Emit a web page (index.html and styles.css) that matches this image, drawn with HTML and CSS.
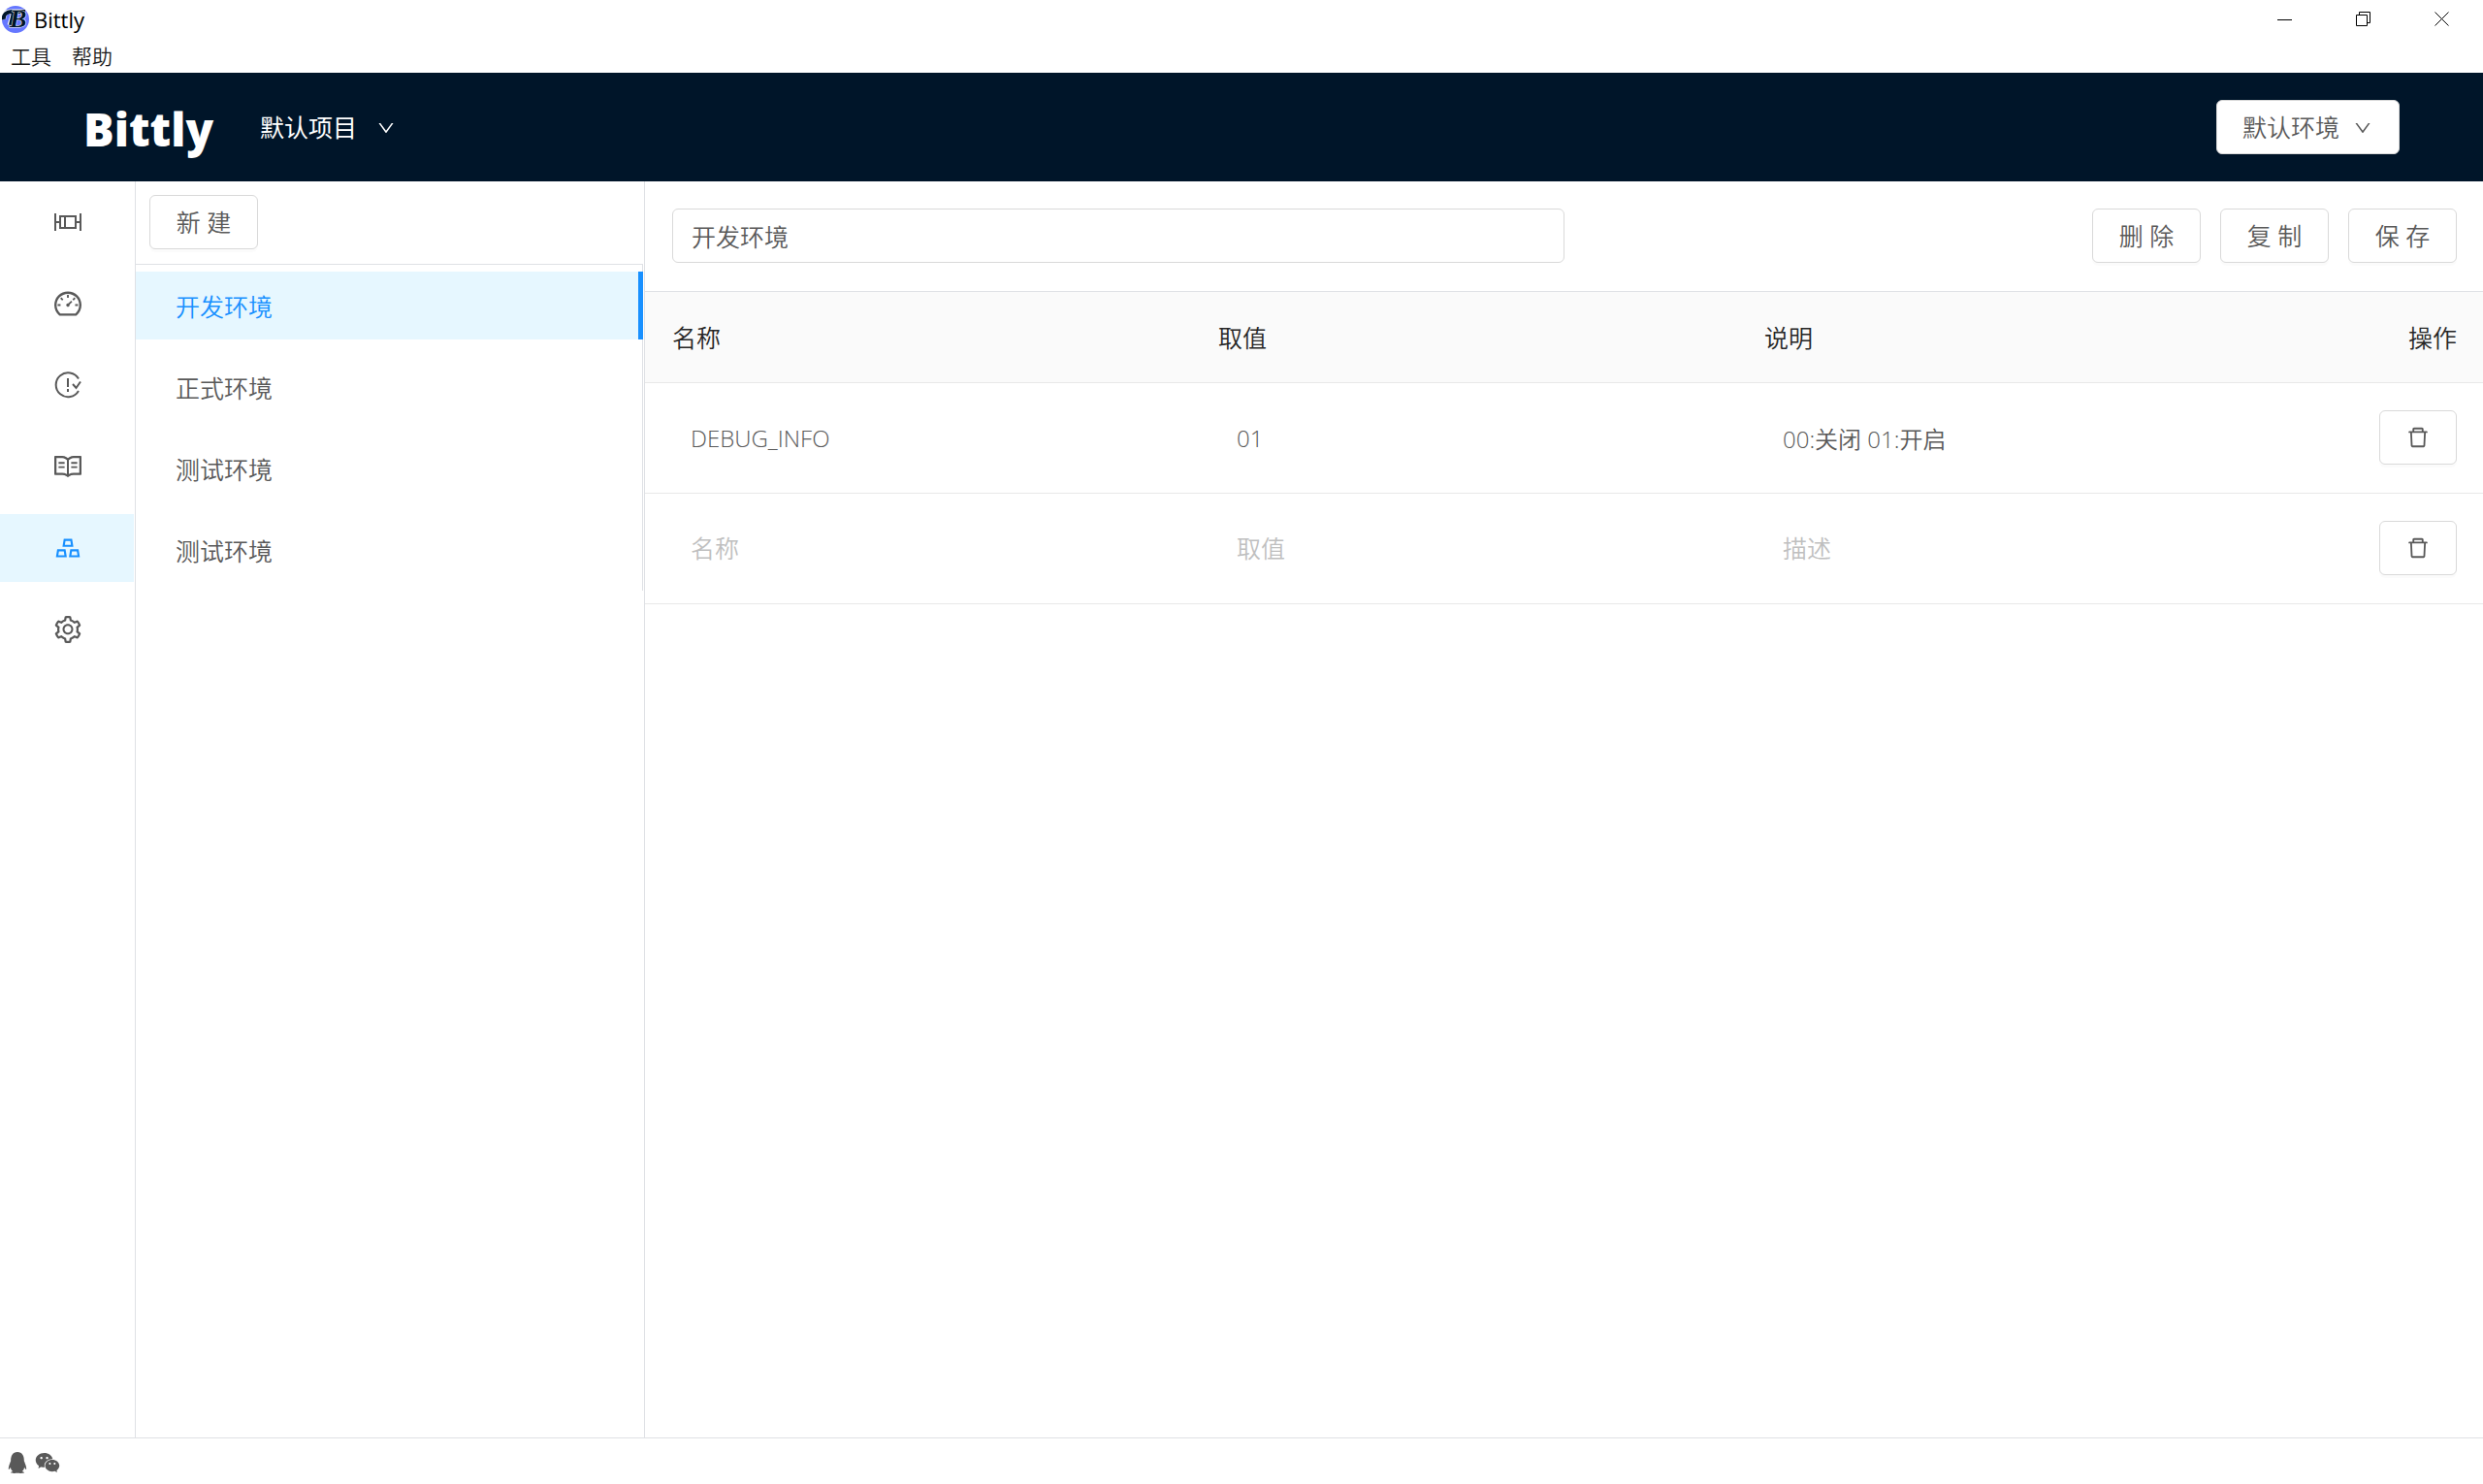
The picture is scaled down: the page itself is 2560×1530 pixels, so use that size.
FILE: index.html
```html
<!DOCTYPE html>
<html lang="zh-CN">
<head>
<meta charset="utf-8">
<title>Bittly</title>
<link rel="stylesheet" href="styles.css">
</head>
<body>
<svg class="sprite" aria-hidden="true">
  <symbol id="i-down" viewBox="0 0 1024 1024"><path d="M884 256h-75c-5.1 0-9.9 2.5-12.9 6.6L512 654.2 227.9 262.6c-3-4.1-7.8-6.6-12.9-6.6h-75c-6.5 0-10.3 7.4-6.5 12.7l352.6 486.1c12.8 17.6 39 17.6 51.7 0l352.6-486.1c3.9-5.3.1-12.7-6.4-12.7z"/></symbol>
  <symbol id="i-delete" viewBox="0 0 1024 1024"><path d="M360 184h-8c4.4 0 8-3.6 8-8v8h304v-8c0 4.4 3.6 8 8 8h-8v72h72v-80c0-35.3-28.7-64-64-64H352c-35.3 0-64 28.7-64 64v80h72v-72zm504 72H160c-17.7 0-32 14.3-32 32v32c0 4.4 3.6 8 8 8h60.4l24.7 523c1.6 34.1 29.8 61 63.9 61h454c34.2 0 62.3-26.8 63.9-61l24.7-523H888c4.4 0 8-3.6 8-8v-32c0-17.7-14.3-32-32-32zM731.3 840H292.7l-24.2-512h487l-24.2 512z"/></symbol>
</svg>

<div class="titlebar">
  <div class="titlebar-name">
    <svg class="app-icon" viewBox="0 0 28 28" aria-hidden="true"><circle cx="14" cy="14" r="14" fill="#6577ff"/><path d="M2 14C1 9 4 6 9 6h14M12 7L8 20" fill="none" stroke="#fff" stroke-width="5"/><path d="M2 14c-1-5 3-8 8-8h14M12 7L9 20" fill="none" stroke="#001529" stroke-width="4"/><text x="8" y="22" class="app-icon-letter">B</text></svg>
    <span>Bittly</span>
  </div>
  <div class="window-controls">
    <button type="button" aria-label="最小化"><svg viewBox="0 0 16 16"><path d="M0 8.500h15"/></svg></button>
    <button type="button" aria-label="还原"><svg viewBox="0 0 16 16"><path d="M.5 3.500h11v11H.5zM3.500 3.500v-3h11v11h-3"/></svg></button>
    <button type="button" aria-label="关闭"><svg viewBox="0 0 16 16"><path d="M.5.5l14 14M14.500.5l-14 14"/></svg></button>
  </div>
</div>
<nav class="menubar">
  <button type="button">工具</button>
  <button type="button">帮助</button>
</nav>

<header class="header">
  <a class="logo" href="#">Bittly</a>
  <button type="button" class="project">默认项目<svg class="i-down"><use href="#i-down"/></svg></button>
  <button type="button" class="btn env">默认环境<svg class="i-down"><use href="#i-down"/></svg></button>
</header>

<div class="body">
  <nav class="rail">
    <a href="#" aria-label="通信"><svg class="stroked" viewBox="0 0 32 32"><path d="M3 7v18M29 7v18M3 16h5M24 16h5M8 10h16v12H8zM13 10v12"/></svg></a>
    <a href="#" aria-label="仪表盘"><svg viewBox="0 0 1024 1024"><path d="M924.8 385.6a446.7 446.7 0 00-96-142.4 446.7 446.7 0 00-142.4-96C631.1 123.8 572.5 112 512 112s-119.1 11.8-174.4 35.2a446.7 446.7 0 00-142.4 96 446.7 446.7 0 00-96 142.4C75.8 440.9 64 499.5 64 560c0 132.7 58.3 257.7 159.9 343.1l1.700 1.400c5.800 4.800 13.100 7.500 20.600 7.500h531.7c7.500 0 14.800-2.700 20.600-7.500l1.700-1.400C901.7 817.7 960 692.7 960 560c0-60.500-11.900-119.100-35.200-174.400zM761.4 836H262.6A371.12 371.12 0 01140 560c0-99.400 38.700-192.800 109-263 70.300-70.300 163.700-109 263-109 99.400 0 192.800 38.700 263 109 70.300 70.300 109 163.700 109 263 0 105.600-44.500 205.500-122.600 276zM623.5 421.5a8.030 8.030 0 00-11.300 0L527.7 506c-18.700-5-39.400-.2-54.100 14.500a55.950 55.950 0 000 79.200 55.950 55.950 0 0079.200 0 55.870 55.870 0 0014.500-54.100l84.500-84.500c3.100-3.100 3.100-8.200 0-11.300l-28.300-28.300zM490 320h44c4.400 0 8-3.600 8-8v-80c0-4.400-3.600-8-8-8h-44c-4.400 0-8 3.600-8 8v80c0 4.400 3.600 8 8 8zm260 218v44c0 4.400 3.600 8 8 8h80c4.400 0 8-3.600 8-8v-44c0-4.400-3.600-8-8-8h-80c-4.400 0-8 3.600-8 8zm12.700-197.200l-31.100-31.100a8.030 8.030 0 00-11.300 0l-56.600 56.600a8.030 8.030 0 000 11.300l31.100 31.100c3.100 3.100 8.200 3.100 11.300 0l56.600-56.600c3.100-3.100 3.100-8.200 0-11.300zm-458.600-31.100a8.030 8.030 0 00-11.300 0l-31.100 31.100a8.030 8.030 0 000 11.300l56.600 56.600c3.100 3.100 8.200 3.100 11.300 0l31.100-31.100c3.100-3.100 3.100-8.200 0-11.300l-56.600-56.600zM262 530h-80c-4.400 0-8 3.600-8 8v44c0 4.400 3.600 8 8 8h80c4.400 0 8-3.600 8-8v-44c0-4.400-3.600-8-8-8z"/></svg></a>
    <a href="#" aria-label="测试"><svg class="stroked" viewBox="0 0 32 32"><path d="M27 9.500A12.500 12.500 0 1 0 27 22M16 9v9M16 20v3"/><path d="M21 15l3.500 4L29 12.500"/></svg></a>
    <a href="#" aria-label="文档"><svg viewBox="0 0 1024 1024"><path d="M928 161H699.2c-49.100 0-97.100 14.100-138.400 40.700L512 233l-48.800-31.300A255.2 255.2 0 00324.8 161H96c-17.700 0-32 14.300-32 32v568c0 17.700 14.300 32 32 32h228.8c49.100 0 97.100 14.100 138.400 40.700l44.400 28.600c1.300.8 2.800 1.300 4.300 1.300s3-.4 4.300-1.300l44.400-28.600C602 807.1 650.1 793 699.2 793H928c17.700 0 32-14.300 32-32V193c0-17.700-14.300-32-32-32zM324.8 721H136V233h188.8c35.400 0 69.800 10.100 99.500 29.200l48.800 31.300 6.900 4.500v462c-47.600-25.600-100.8-39-155.2-39zm563.2 0H699.2c-54.400 0-107.6 13.400-155.2 39V298l6.900-4.500 48.800-31.300c29.700-19.100 64.100-29.200 99.500-29.200H888v488zM396.9 361H211.1c-3.900 0-7.100 3.400-7.100 7.500v45c0 4.100 3.200 7.500 7.100 7.500h185.7c3.900 0 7.100-3.400 7.100-7.500v-45c.1-4.100-3.100-7.500-7-7.500zm223.1 7.500v45c0 4.100 3.200 7.500 7.100 7.500h185.7c3.900 0 7.100-3.400 7.100-7.500v-45c0-4.100-3.200-7.500-7.100-7.500H627.1c-3.900 0-7.100 3.400-7.100 7.500zM396.9 501H211.1c-3.900 0-7.100 3.400-7.100 7.500v45c0 4.100 3.200 7.500 7.100 7.500h185.7c3.900 0 7.100-3.400 7.100-7.500v-45c.1-4.100-3.100-7.500-7-7.500zm416 0H627.1c-3.900 0-7.100 3.400-7.100 7.500v45c0 4.100 3.200 7.500 7.100 7.500h185.7c3.900 0 7.100-3.400 7.100-7.500v-45c.1-4.100-3.100-7.500-7-7.500z"/></svg></a>
    <a href="#" aria-label="环境" class="active"><svg viewBox="0 0 1024 1024"><path d="M342 472h342c.4 0 .9 0 1.300-.1 4.400-.7 7.300-4.800 6.600-9.200l-40.200-248c-.6-3.900-4-6.700-7.900-6.700H382.200c-3.900 0-7.300 2.800-7.900 6.700l-40.200 248c-.1.4-.1.9-.1 1.300 0 4.400 3.600 8 8 8zm91.200-196h159.5l20.700 128h-201l20.800-128zm2.500 282.700c-.6-3.900-4-6.700-7.900-6.700H166.2c-3.900 0-7.300 2.800-7.900 6.700l-40.200 248c-.1.4-.1.9-.1 1.300 0 4.400 3.600 8 8 8h342c.4 0 .9 0 1.300-.1 4.400-.7 7.300-4.800 6.600-9.200l-40.200-248zM196.5 748l20.700-128h159.5l20.700 128H196.5zm709.4 58.7l-40.200-248c-.6-3.900-4-6.700-7.900-6.700H596.2c-3.900 0-7.300 2.800-7.900 6.700l-40.200 248c-.1.4-.1.9-.1 1.300 0 4.400 3.600 8 8 8h342c.4 0 .9 0 1.300-.1 4.300-.7 7.300-4.800 6.600-9.200zM626.5 748l20.700-128h159.5l20.700 128H626.5z"/></svg></a>
    <a href="#" aria-label="设置"><svg viewBox="0 0 1024 1024"><path d="M924.8 625.7l-65.500-56c3.100-19 4.700-38.400 4.700-57.800s-1.600-38.800-4.700-57.800l65.500-56a32.030 32.030 0 009.300-35.200l-.9-2.600a443.740 443.740 0 00-79.700-137.900l-1.800-2.100a32.120 32.120 0 00-35.100-9.500l-81.300 28.900c-30-24.600-63.500-44-99.700-57.600l-15.700-85a32.050 32.050 0 00-25.800-25.700l-2.700-.5c-52.100-9.400-106.900-9.400-159 0l-2.700.5a32.050 32.050 0 00-25.800 25.700l-15.800 85.400a351.860 351.860 0 00-99 57.400l-81.900-29.100a32 32 0 00-35.100 9.500l-1.800 2.100a446.020 446.020 0 00-79.700 137.900l-.9 2.600c-4.500 12.500-.8 26.500 9.300 35.200l66.300 56.600c-3.100 18.800-4.600 38-4.600 57.100 0 19.200 1.500 38.400 4.600 57.100L99 625.5a32.030 32.030 0 00-9.300 35.200l.9 2.600c18.100 50.400 44.900 96.900 79.700 137.900l1.800 2.100a32.120 32.120 0 0035.100 9.500l81.900-29.100c29.800 24.500 63.100 43.900 99 57.400l15.800 85.400a32.050 32.050 0 0025.800 25.700l2.700.5a449.400 449.400 0 00159 0l2.700-.5a32.050 32.050 0 0025.800-25.700l15.700-85a350 350 0 0099.700-57.600l81.300 28.900a32 32 0 0035.100-9.500l1.800-2.100c34.800-41.100 61.600-87.500 79.700-137.900l.9-2.600c4.500-12.300.8-26.300-9.300-35zM788.3 465.9c2.500 15.100 3.800 30.600 3.800 46.100s-1.300 31-3.800 46.100l-6.600 40.100 74.700 63.900a370.030 370.030 0 01-42.600 73.600L721 702.8l-31.400 25.800c-23.900 19.600-50.500 35-79.300 45.800l-38.100 14.300-17.900 97a377.500 377.500 0 01-85 0l-17.900-97.200-37.800-14.500c-28.500-10.800-55-26.200-78.700-45.700l-31.400-25.900-93.400 33.200c-17-22.900-31.200-47.600-42.600-73.600l75.500-64.500-6.500-40c-2.400-14.900-3.700-30.300-3.700-45.500 0-15.300 1.200-30.600 3.700-45.500l6.500-40-75.500-64.500c11.300-26.100 25.600-50.700 42.600-73.600l93.400 33.200 31.400-25.900c23.700-19.500 50.200-34.900 78.700-45.700l37.900-14.300 17.900-97.200c28.100-3.200 56.800-3.200 85 0l17.900 97 38.100 14.300c28.700 10.800 55.400 26.200 79.300 45.800l31.400 25.800 92.800-32.900c17 22.900 31.200 47.600 42.600 73.600L781.8 426l6.500 39.900zM512 326c-97.200 0-176 78.800-176 176s78.800 176 176 176 176-78.800 176-176-78.800-176-176-176zm79.200 255.200A111.6 111.6 0 01512 614c-29.900 0-58-11.700-79.200-32.800A111.6 111.6 0 01400 502c0-29.900 11.700-58 32.800-79.200C454 401.6 482.1 390 512 390c29.900 0 58 11.600 79.200 32.800A111.6 111.6 0 01624 502c0 29.900-11.700 58-32.800 79.200z"/></svg></a>
  </nav>

  <aside class="envs">
    <div class="envs-tools"><button type="button" class="btn">新 建</button></div>
    <ul class="envs-list">
      <li><a href="#" class="active">开发环境</a></li>
      <li><a href="#">正式环境</a></li>
      <li><a href="#">测试环境</a></li>
      <li><a href="#">测试环境</a></li>
    </ul>
  </aside>

  <main class="main">
    <form class="toolbar">
      <input class="field env-name" type="text" aria-label="环境名称" value="开发环境">
      <div class="actions">
        <button type="button" class="btn">删 除</button>
        <button type="button" class="btn">复 制</button>
        <button type="button" class="btn">保 存</button>
      </div>
    </form>
    <table class="vars">
      <thead>
        <tr><th>名称</th><th>取值</th><th>说明</th><th class="op">操作</th></tr>
      </thead>
      <tbody>
        <tr>
          <td><input class="field" type="text" aria-label="名称" value="DEBUG_INFO"></td>
          <td><input class="field" type="text" aria-label="取值" value="01"></td>
          <td><input class="field" type="text" aria-label="说明" value="00:关闭 01:开启"></td>
          <td class="op"><button type="button" class="btn" aria-label="删除"><svg class="i-delete"><use href="#i-delete"/></svg></button></td>
        </tr>
        <tr>
          <td><input class="field" type="text" aria-label="名称" placeholder="名称"></td>
          <td><input class="field" type="text" aria-label="取值" placeholder="取值"></td>
          <td><input class="field" type="text" aria-label="说明" placeholder="描述"></td>
          <td class="op"><button type="button" class="btn" aria-label="删除"><svg class="i-delete"><use href="#i-delete"/></svg></button></td>
        </tr>
      </tbody>
    </table>
  </main>
</div>

<footer class="footer">
  <a href="#" aria-label="QQ"><svg viewBox="0 0 1024 1024"><path d="M824.8 613.2c-16-51.400-34.400-94.600-62.700-165.300C766.5 262.2 689.3 112 511.5 112 331.7 112 256.2 265.2 261 447.9c-28.400 70.800-46.700 113.700-62.700 165.300-34 109.500-23 154.800-14.600 155.800 18 2.200 70.100-82.400 70.100-82.400 0 49 25.200 112.900 79.800 159-26.400 8.100-85.700 29.900-71.600 53.800 11.400 19.300 196.2 12.300 249.5 6.300 53.300 6 238.1 13 249.5-6.300 14.100-23.800-45.300-45.700-71.600-53.800 54.600-46.200 79.800-110.1 79.800-159 0 0 52.100 84.600 70.100 82.400 8.500-1.100 19.500-46.400-14.500-155.800z"/></svg></a>
  <a href="#" aria-label="微信"><svg viewBox="0 0 1024 1024"><path d="M690.1 377.4c5.900 0 11.800.2 17.600.5-24.400-128.7-158.3-227.1-319.9-227.1C209 150.8 64 271.4 64 420.2c0 81.100 43.600 154.2 111.9 203.6a21.500 21.500 0 019.100 17.600c0 2.400-.5 4.600-1.100 6.900-5.500 20.300-14.200 52.800-14.600 54.300-.7 2.600-1.700 5.200-1.700 7.900 0 5.900 4.800 10.800 10.800 10.800 2.300 0 4.200-.9 6.200-2l70.900-40.900c5.300-3.100 11-5 17.200-5 3.200 0 6.400.5 9.500 1.400 33.100 9.500 68.800 14.800 105.7 14.800 6 0 11.900-.1 17.800-.4-7.100-21-10.900-43.100-10.900-66 0-135.8 132.2-245.8 295.3-245.8zm-194.3-86.5c23.800 0 43.200 19.300 43.200 43.100s-19.300 43.100-43.200 43.100c-23.800 0-43.200-19.300-43.200-43.100s19.400-43.100 43.200-43.100zm-215.9 86.200c-23.800 0-43.200-19.300-43.200-43.100s19.300-43.100 43.200-43.100 43.200 19.300 43.200 43.100-19.400 43.100-43.200 43.100zm586.8 415.6c56.900-41.200 93.200-102 93.200-169.700 0-124-120.8-224.5-269.9-224.5-149 0-269.9 100.5-269.9 224.5S540.9 847.5 690 847.5c30.800 0 60.600-4.400 88.100-12.300 2.600-.8 5.200-1.200 7.900-1.200 5.200 0 9.900 1.600 14.300 4.100l59.100 34c1.700 1 3.300 1.700 5.200 1.700a9 9 0 006.400-2.600 9 9 0 002.600-6.400c0-2.200-.9-4.400-1.400-6.600-.3-1.200-7.600-28.300-12.200-45.300-.5-1.900-.9-3.800-.9-5.700.1-5.900 3.100-11.200 7.600-14.500zM600.2 587.2c-19.900 0-36-16.100-36-35.900 0-19.800 16.100-35.900 36-35.900s36 16.100 36 35.900c0 19.800-16.200 35.900-36 35.900zm179.9 0c-19.900 0-36-16.100-36-35.900 0-19.800 16.100-35.900 36-35.900s36 16.100 36 35.900a36.080 36.080 0 01-36 35.900z"/></svg></a>
</footer>
</body>
</html>
```
FILE: styles.css
```css
* { box-sizing: border-box; }

:root {
  --text: #595959;
  --line: #dfe1e5;
  --border: #d9d9d9;
  --blue: #1890ff;
  --blue-bg: #e6f7ff;
  --navy: #001529;
}

body {
  margin: 0;
  min-height: 100vh;
  display: flex;
  flex-direction: column;
  background: #fff;
  color: var(--text);
  font: 350 25px/40px "Open Sans", "Noto Sans CJK SC", sans-serif;
}

a { color: inherit; text-decoration: none; }
button, input { font: inherit; color: inherit; }
button { padding: 0; border: 0; background: none; cursor: pointer; }
svg { display: block; fill: currentColor; }
.sprite { position: absolute; width: 0; height: 0; }

/* Window chrome */
.titlebar {
  display: flex;
  justify-content: space-between;
  height: 40px;
  color: #000;
}
.titlebar-name {
  display: flex;
  align-items: center;
  gap: 5px;
  padding-left: 2px;
  font-size: 22px;
  font-weight: 400;
}
.app-icon { width: 28px; height: 28px; }
.app-icon-letter {
  font: italic 700 26px "Liberation Serif", serif;
  fill: #001529;
  stroke: #fff;
  stroke-width: 1px;
  paint-order: stroke;
}
.window-controls { display: flex; padding-right: 2px; }
.window-controls button {
  display: grid;
  place-items: center;
  width: 81px;
}
.window-controls svg {
  width: 16px;
  height: 16px;
  fill: none;
  stroke: #000;
}
.menubar {
  display: flex;
  gap: 21px;
  height: 35px;
  padding-left: 11px;
  color: #1a1a1a;
  font-size: 21px;
}
.menubar button { line-height: 36px; }

/* Application header */
.header {
  display: flex;
  align-items: center;
  height: 112px;
  padding: 0 86px;
  background: var(--navy);
  color: #fff;
}
.logo {
  padding-top: 4px;
  font: 800 47px/56px "Open Sans", sans-serif;
}
.project {
  display: flex;
  align-items: center;
  gap: 20px;
  margin-left: 48px;
  font-weight: 400;
}
.i-down { width: 20px; height: 22px; padding-top: 2px; }

.btn {
  min-width: 112px;
  height: 56px;
  padding: 0 26px;
  border: 1px solid var(--border);
  border-radius: 6px;
  background: #fff;
  color: var(--text);
  box-shadow: 0 3px 0 rgba(0, 0, 0, .016);
}
.env {
  display: flex;
  align-items: center;
  gap: 14px;
  padding-right: 27px;
  margin-left: auto;
}
.i-delete { width: 26px; height: 28px; }

.body { flex: 1; display: flex; }

/* Icon navigation */
.rail {
  flex: none;
  display: flex;
  flex-direction: column;
  gap: 14px;
  width: 140px;
  padding: 7px 1px 7px 0;
  border-right: 1px solid var(--line);
}
.rail a {
  display: grid;
  place-items: center;
  height: 70px;
  padding-left: 2px;
}
.rail svg { width: 32px; height: 32px; }
.rail .stroked {
  fill: none;
  stroke: currentColor;
  stroke-width: 2px;
}
.rail .active { background: var(--blue-bg); color: var(--blue); }

/* Environment list */
.envs {
  flex: none;
  width: 525px;
  padding-right: 1px;
  border-right: 1px solid var(--line);
}
.envs-tools { padding: 14px 14px 15px; }
.envs-tools .btn { display: block; }
.envs-list {
  display: flex;
  flex-direction: column;
  gap: 14px;
  margin: 0;
  padding: 7px 0;
  border: 1px solid var(--line);
  border-width: 1px 1px 0 0;
  list-style: none;
}
.envs-list a {
  display: block;
  margin-right: -1px;
  padding: 16px 41px 14px;
  border-right: 5px solid transparent;
}
.envs-list .active {
  border-color: var(--blue);
  background: var(--blue-bg);
  color: var(--blue);
}

/* Variable editor */
.main { flex: 1; min-width: 0; }
.toolbar {
  display: flex;
  justify-content: space-between;
  padding: 28px 27px 29px 28px;
  border-bottom: 1px solid var(--line);
}
.field {
  display: block;
  width: 100%;
  height: 56px;
  padding: 0 19px;
  border: 1px solid transparent;
  border-radius: 6px;
  background: transparent;
  outline: none;
}
.field::placeholder { color: #bfbfbf; opacity: 1; }
.toolbar .env-name { width: 50%; border-color: var(--border); }
.actions { display: flex; gap: 20px; }

.vars {
  width: 100%;
  table-layout: fixed;
  border-collapse: separate;
  border-spacing: 0;
}
.vars th, .vars td {
  padding: 28px 27px 29px 28px;
  border-bottom: 1px solid #e8e8e8;
  text-align: left;
}
.vars th {
  height: 94px;
  padding-top: 0;
  padding-bottom: 0;
  background: #fafafa;
  color: #262626;
  font-weight: 350;
}
.vars .field { padding: 0 18px; font-size: 24px; }
.vars .field::placeholder { font-size: 25px; }
.vars .op { width: 206px; text-align: right; }
.vars .op .btn {
  display: block;
  min-width: 80px;
  margin-left: auto;
}

.footer {
  display: flex;
  gap: 3px;
  height: 48px;
  padding: 11px 4px;
  border-top: 1px solid var(--line);
}
.footer svg { width: 28px; height: 28px; }
```
